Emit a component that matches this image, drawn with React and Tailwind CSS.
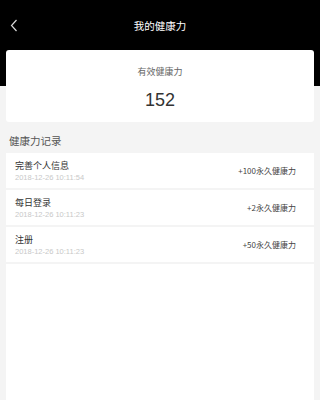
const records = [
  { title: "完善个人信息", time: "2018-12-26 10:11:54", points: "+100永久健康力" },
  { title: "每日登录", time: "2018-12-26 10:11:23", points: "+2永久健康力" },
  { title: "注册", time: "2018-12-26 10:11:23", points: "+50永久健康力" },
];

const App = () => {
  return (
    <div
      className="min-h-[400px] bg-[#f4f4f4] flex flex-col"
      style={{ fontFamily: '"Noto Sans CJK SC", "Liberation Sans", sans-serif' }}
    >
      <div className="bg-black h-[86px] relative shrink-0">
        <div className="h-[52px] flex items-center justify-center relative">
          <svg
            className="absolute left-[10px] top-[19px]"
            width="8"
            height="13"
            viewBox="0 0 8 13"
            fill="none"
          >
            <path d="M6.5 1 L1.5 6.5 L6.5 12" stroke="#d8d8d8" strokeWidth="1.2" />
          </svg>
          <span className="text-white text-[10.5px]">我的健康力</span>
        </div>
      </div>

      <div className="mx-[6px] -mt-[36px] relative bg-white rounded-[3px] h-[72px] flex flex-col items-center">
        <span className="text-[#666] text-[9px] mt-[17px] leading-none">有效健康力</span>
        <span
          className="text-[#333] text-[18px] mt-[15px] leading-none"
          style={{ fontFamily: '"Liberation Sans", sans-serif' }}
        >
          152
        </span>
      </div>

      <div className="px-[9px] pt-[12px] pb-[5px] text-[10.5px] text-[#555] leading-[14px]">健康力记录</div>

      <div className="mx-[6px] flex flex-col gap-[2px] flex-1">
        {records.map((r) => (
          <div key={r.title} className="bg-white h-[35px] flex items-center justify-between pl-[9px] pr-[18px]">
            <div className="flex flex-col">
              <span className="text-[9px] text-[#333] leading-[13px]">{r.title}</span>
              <span
                className="text-[7.5px] text-[#c8c8c8] leading-[11px]"
                style={{ fontFamily: '"Liberation Sans", sans-serif' }}
              >
                {r.time}
              </span>
            </div>
            <span className="text-[8px] text-[#444]">{r.points}</span>
          </div>
        ))}
        <div className="bg-white flex-1 min-h-[140px]" />
      </div>
    </div>
  );
};

export default App;
